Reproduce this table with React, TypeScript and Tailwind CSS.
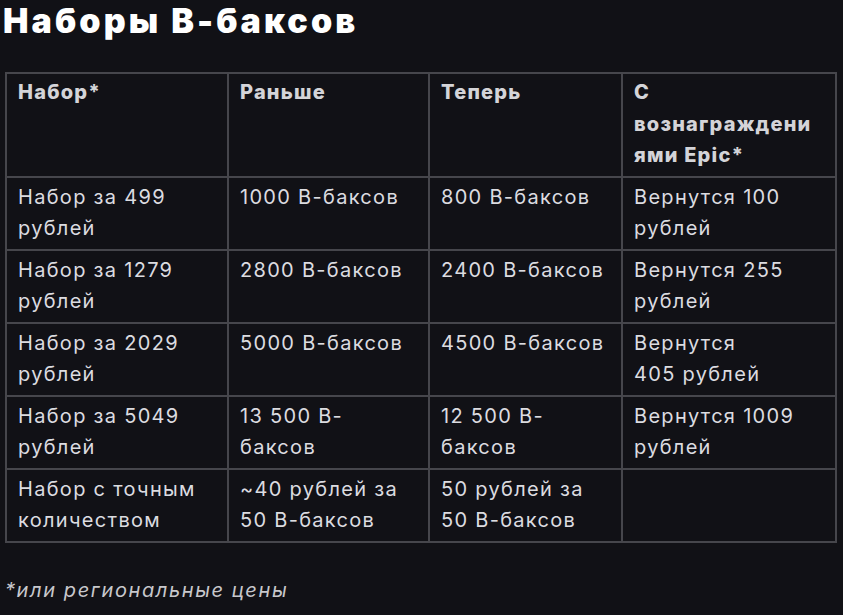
const rows: string[][] = [
  ['Набор за 499 рублей', '1000 В-баксов', '800 В-баксов', 'Вернутся 100 рублей'],
  ['Набор за 1279 рублей', '2800 В-баксов', '2400 В-баксов', 'Вернутся 255 рублей'],
  ['Набор за 2029 рублей', '5000 В-баксов', '4500 В-баксов', 'Вернутся 405\u00a0рублей'],
  ['Набор за 5049 рублей', '13 500 В-баксов', '12 500 В-баксов', 'Вернутся 1009 рублей'],
  ['Набор с точным количеством', '~40 рублей за 50 В-баксов', '50 рублей за 50 В-баксов', ''],
];

const headers = ['Набор*', 'Раньше', 'Теперь', 'С вознаграждениями Epic*'];

export default function App() {
  return (
    <div
      className="min-h-[615px] w-full bg-[#111116] px-[5px] pt-0 text-[#d4d4d8]"
      style={{ fontFamily: 'Inter, "Noto Sans", sans-serif' }}
    >
      <h1 className="pt-[1px] -ml-[2px] text-[34px] leading-[40px] font-black tracking-[3.1px] text-white">
        Наборы В-баксов
      </h1>
      <table className="mt-[31px] w-[830px] table-fixed border-collapse border-2 border-[#46464c]">
        <colgroup>
          <col className="w-[222px]" />
          <col className="w-[201px]" />
          <col className="w-[193px]" />
          <col className="w-[214px]" />
        </colgroup>
        <thead>
          <tr>
            {headers.map((h) => (
              <th
                key={h}
                className="border-2 border-[#46464c] px-[11px] pt-[3px] pb-[4px] text-left align-top text-[20px] leading-[31.5px] font-extrabold tracking-[1.2px] text-[#d4d4d8] [overflow-wrap:anywhere]"
              >
                {h}
              </th>
            ))}
          </tr>
        </thead>
        <tbody>
          {rows.map((r, i) => (
            <tr key={i}>
              {r.map((c, j) => (
                <td
                  key={j}
                  className="border-2 border-[#46464c] px-[11px] pt-[4px] pb-[4px] align-top text-[20px] leading-[31.5px] tracking-[1.3px] text-[#dcdce0]"
                >
                  {c}
                </td>
              ))}
            </tr>
          ))}
        </tbody>
      </table>
      <p className="mt-[31px] text-[20px] italic leading-[32px] tracking-[1.6px] text-[#c8c8cc]">
        *или региональные цены
      </p>
    </div>
  );
}
